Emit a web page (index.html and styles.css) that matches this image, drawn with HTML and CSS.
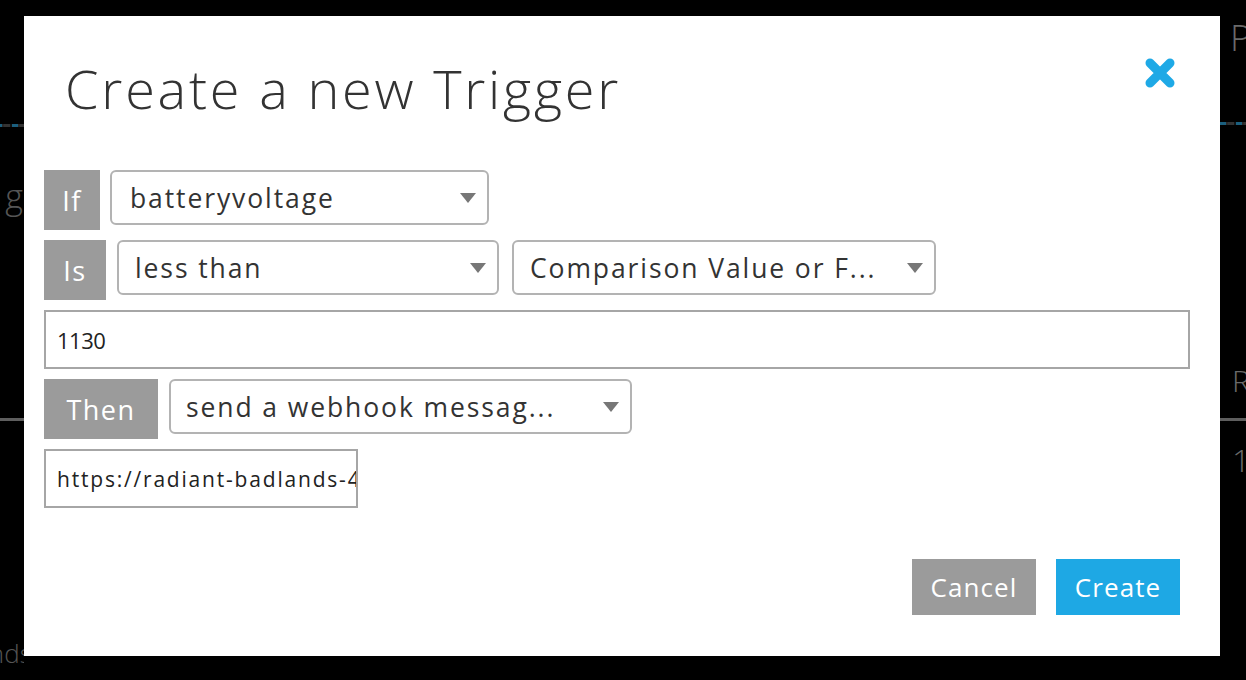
FILE: index.html
```html
<!DOCTYPE html>
<html>
<head>
<meta charset="utf-8">
<link rel="stylesheet" href="styles.css">
</head>
<body>
<div class="page">
  <div class="strip strip-left">
    <div class="dash dash-left"></div>
    <div class="bg-text bg-g">g</div>
    <div class="rule rule-left"></div>
    <div class="bg-text bg-nds">nds.</div>
  </div>

  <div class="modal">
    <div class="modal-head">
      <h1 class="title">Create a new Trigger</h1>
      <button class="close" aria-label="Close">
        <svg width="32" height="32" viewBox="0 0 32 32"><path d="M6 6 L26 26 M26 6 L6 26" stroke="#1ea9e6" stroke-width="9" stroke-linecap="round" fill="none"/></svg>
      </button>
    </div>

    <div class="form">
      <div class="row">
        <div class="tag tag-if">If</div>
        <div class="select sel-if"><span class="sel-text">batteryvoltage</span><span class="caret"></span></div>
      </div>
      <div class="row">
        <div class="tag tag-is">Is</div>
        <div class="select sel-op"><span class="sel-text">less than</span><span class="caret"></span></div>
        <div class="select sel-cmp"><span class="sel-text">Comparison Value or F...</span><span class="caret"></span></div>
      </div>
      <div class="row">
        <input class="field field-wide" type="text" value="1130">
      </div>
      <div class="row">
        <div class="tag tag-then">Then</div>
        <div class="select sel-then"><span class="sel-text">send a webhook messag...</span><span class="caret"></span></div>
      </div>
      <div class="row">
        <input class="field field-url" type="text" value="https://radiant-badlands-40512.herokuapp.com/trigger">
      </div>
    </div>

    <div class="actions">
      <button class="btn btn-cancel">Cancel</button>
      <button class="btn btn-create">Create</button>
    </div>
  </div>

  <div class="strip strip-right">
    <div class="bg-text bg-p">P</div>
    <div class="dash dash-right"></div>
    <div class="bg-text bg-r">R</div>
    <div class="rule rule-right"></div>
    <div class="bg-text bg-1">1</div>
  </div>
</div>
</body>
</html>
```

FILE: styles.css
```css
html, body {
  margin: 0;
  padding: 0;
  background: #000;
}
body {
  width: 1246px;
  height: 680px;
  overflow: hidden;
  font-family: "Open Sans", "Lato", sans-serif;
}
.page {
  display: flex;
  height: 680px;
}

/* dimmed background strips */
.strip {
  display: flex;
  flex-direction: column;
  overflow: hidden;
  flex: none;
}
.strip-left {
  width: 24px;
  align-items: flex-end;
}
.strip-right {
  width: 26px;
  align-items: flex-start;
}
.bg-text {
  color: #555;
  font-weight: 300;
  white-space: nowrap;
  line-height: 1;
}
.dash {
  height: 3px;
  width: 60px;
  flex: none;
  background: repeating-linear-gradient(90deg, #1b5f7e 0 6px, #2a2a2a 6px 8px, #333 8px 14px, #111 14px 16px);
}
.dash-left { margin-top: 124px; }
.dash-right { margin-top: 66px; }
.bg-g {
  font-size: 34px;
  margin-top: 52px;
  margin-right: 1px;
}
.rule {
  height: 3px;
  width: 60px;
  flex: none;
  background: #5e5e5e;
}
.rule-left { margin-top: 205px; }
.rule-right { margin-top: 22px; }
.bg-nds {
  font-size: 26px;
  margin-top: 219px;
  margin-right: -14px;
}
.bg-p {
  font-size: 36px;
  color: #6a6a6a;
  margin-top: 20px;
  margin-left: 10px;
}
.bg-r {
  font-size: 30px;
  color: #6a6a6a;
  margin-top: 241px;
  margin-left: 12px;
}
.bg-1 {
  font-size: 32px;
  color: #6a6a6a;
  margin-top: 23px;
  margin-left: 12px;
}

/* modal */
.modal {
  flex: none;
  width: 1196px;
  height: 640px;
  margin-top: 16px;
  background: #fff;
  box-sizing: border-box;
  padding: 0 30px 0 20px;
  display: flex;
  flex-direction: column;
}
.modal-head {
  display: flex;
  justify-content: space-between;
  align-items: flex-start;
  height: 154px;
}
.title {
  margin: 0;
  margin-top: 36px;
  margin-left: 21px;
  font-size: 54px;
  line-height: 72px;
  font-weight: 300;
  color: #333;
  letter-spacing: 2.8px;
}
.close {
  border: 0;
  background: none;
  padding: 0;
  margin-top: 41px;
  margin-right: 14px;
  width: 32px;
  height: 32px;
  display: block;
}
.close svg { display: block; }

.form {
  display: flex;
  flex-direction: column;
  gap: 10px;
}
.row {
  display: flex;
  align-items: flex-start;
  gap: 11px;
}
.tag {
  height: 60px;
  background: #9b9b9b;
  color: #fff;
  font-size: 27px;
  letter-spacing: 1.5px;
  display: flex;
  align-items: center;
  justify-content: center;
  box-sizing: border-box;
  flex: none;
}
.tag-if { width: 56px; margin-right: -1px; }
.tag-is { width: 62px; }
.tag-then { width: 114px; }

.select {
  height: 55px;
  box-sizing: border-box;
  border: 2px solid #b3b3b3;
  border-radius: 6px;
  display: flex;
  align-items: center;
  padding: 0 11px 0 18px;
  color: #333;
  font-size: 26.5px;
  flex: none;
}
.sel-text {
  flex: 1;
  white-space: nowrap;
  overflow: hidden;
  letter-spacing: 1.9px;
}
.caret {
  width: 0;
  height: 0;
  border-left: 8px solid transparent;
  border-right: 8px solid transparent;
  border-top: 10px solid #777;
  flex: none;
}
.sel-if { width: 379px; }
.sel-op { width: 382px; }
.sel-op .sel-text { margin-left: -2px; }
.sel-cmp { width: 424px; margin-left: 2px; }
.sel-cmp .sel-text { margin-left: -2px; }
.sel-then { width: 463px; }
.sel-then .sel-text { margin-left: -3px; }

.field {
  box-sizing: border-box;
  height: 59px;
  border: 2px solid #a6a6a6;
  border-radius: 0;
  background: #fff;
  color: #222;
  font-family: "Open Sans", "Lato", sans-serif;
  padding: 0 11px;
  outline: none;
}
.field-wide {
  width: 1146px;
  font-size: 22px;
  letter-spacing: -0.5px;
}
.field-url {
  width: 314px;
  font-size: 21px;
  letter-spacing: 1.8px;
  padding-right: 0;
}

.actions {
  display: flex;
  justify-content: flex-end;
  gap: 20px;
  margin-top: 51px;
  padding-right: 10px;
}
.btn {
  width: 124px;
  height: 56px;
  border: 0;
  color: #fff;
  font-family: "Open Sans", "Lato", sans-serif;
  font-size: 26px;
  letter-spacing: 1.1px;
  padding: 0;
}
.btn-cancel { background: #9b9b9b; }
.btn-create { background: #1ea8e4; }
```
